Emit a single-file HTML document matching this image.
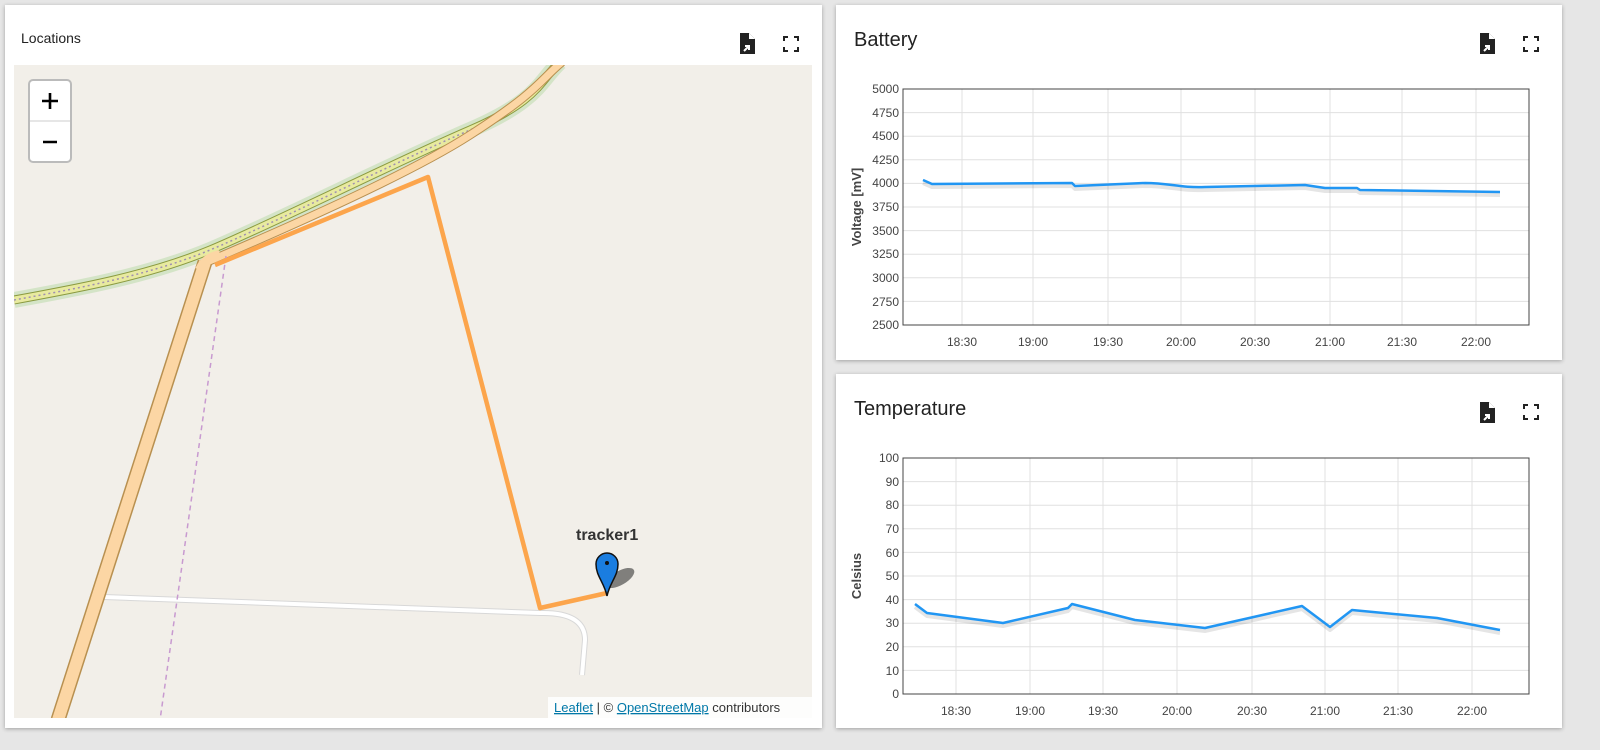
<!DOCTYPE html>
<html><head><meta charset="utf-8"><style>
body{margin:0;width:1600px;height:750px;background:#e6e6e6;font-family:"Liberation Sans",sans-serif;position:relative;overflow:hidden}
.card{position:absolute;background:#fff;box-shadow:0 1px 4px rgba(0,0,0,.3)}
.t{position:absolute;color:#222}
svg{position:absolute;left:0;top:0}
.ic{position:absolute}
</style></head><body>
<div class="card" style="left:5px;top:5px;width:817px;height:723px"></div>
<div class="card" style="left:836px;top:5px;width:726px;height:355px"></div>
<div class="card" style="left:836px;top:374px;width:726px;height:354px"></div>
<div class="t" style="left:21px;top:30px;font-size:14px">Locations</div>
<div class="t" style="left:854px;top:29px;font-size:20px">Battery</div>
<div class="t" style="left:854px;top:398px;font-size:20px">Temperature</div>
<svg width="1600" height="750" viewBox="0 0 1600 750">
<defs><clipPath id="m"><rect x="14" y="65" width="798" height="653"/></clipPath>
<g id="dl"><path d="M0 -9h9l6 6v15h-15z" fill="#222"/><path d="M9 -9v6h6" fill="#fff"/><path d="M4 9l5-5M5 4h4v4" stroke="#fff" stroke-width="2" fill="none"/></g>
<g id="fs" fill="none" stroke="#222" stroke-width="2"><path d="M0 4V0h4M10 0h4v4M14 10v4h-4M4 14H0v-4"/></g>
</defs>
<!-- icons -->
<use href="#dl" x="740" y="42"/><use href="#fs" x="784" y="37"/>
<use href="#dl" x="1480" y="42"/><use href="#fs" x="1524" y="37"/>
<use href="#dl" x="1480" y="411"/><use href="#fs" x="1524" y="405"/>
<!-- map -->
<g clip-path="url(#m)">
<rect x="14" y="65" width="798" height="653" fill="#f2efe9"/>
<path d="M14 300C80 288 150 275 210 250S400 160 470 130S540 80 560 62" stroke="#c8e0b8" stroke-width="16" fill="none" opacity=".7"/>
<path d="M14 300C80 288 150 275 210 250S400 160 470 130S540 80 560 62" stroke="#8a9a40" stroke-width="9" fill="none"/>
<path d="M14 300C80 288 150 275 210 250S400 160 470 130S540 80 560 62" stroke="#e8eaa0" stroke-width="7" fill="none"/>
<path d="M14 300C80 288 150 275 210 250S400 160 470 130S540 80 560 62" stroke="#a090b0" stroke-width="1.5" stroke-dasharray="2 3" fill="none"/>
<path d="M200 265C240 248 400 180 470 135S540 80 562 62" stroke="#b89050" stroke-width="9" fill="none"/>
<path d="M200 265C240 248 400 180 470 135S540 80 562 62" stroke="#fcd6a4" stroke-width="7" fill="none"/>
<path d="M104 597L540 613Q585 612 585 640L582 675" stroke="#d8d8d8" stroke-width="6" fill="none"/>
<path d="M104 597L540 613Q585 612 585 640L582 675" stroke="#fff" stroke-width="4" fill="none"/>
<path d="M205 262L58 720" stroke="#b89050" stroke-width="15" fill="none"/>
<path d="M205 262L58 720" stroke="#fcd6a4" stroke-width="12" fill="none"/>
<path d="M200 270Q205 258 220 255" stroke="#fcd6a4" stroke-width="10" fill="none"/>
<path d="M226 256L160 720" stroke="#c89ad0" stroke-width="1.5" stroke-dasharray="5 4" fill="none"/>
<path d="M215 265L428 177L540 608L607 593" stroke="#fca54c" stroke-width="4.5" fill="none" stroke-linejoin="round"/>
<ellipse cx="620" cy="578" rx="16" ry="7" fill="#333" opacity=".6" transform="rotate(-30 620 578)"/>
<path d="M607 596C604 582 596 576 596 564a11 11 0 0 1 22 0c0 12-8 18-11 32z" fill="#1a7de0" stroke="#111" stroke-width="1.5"/>
<circle cx="607" cy="563" r="2" fill="#111"/>
<rect x="548" y="697" width="264" height="21" fill="#fff" opacity=".85"/>
</g>
<text x="576" y="540" font-size="16" font-weight="bold" fill="#333">tracker1</text>
<text x="554" y="712" font-size="13" fill="#333"><tspan fill="#0078a8" text-decoration="underline">Leaflet</tspan> | © <tspan fill="#0078a8" text-decoration="underline">OpenStreetMap</tspan> contributors</text>
<!-- zoom control -->
<rect x="29" y="80" width="42" height="82" rx="4" fill="#fff" stroke="#bbb" stroke-width="2"/>
<line x1="30" y1="121" x2="70" y2="121" stroke="#ccc"/>
<path d="M42 101h16M50 93v16M43 142h14" stroke="#000" stroke-width="2.6"/>
<!-- battery chart -->
<g stroke="#e0e0e0" stroke-width="1">
<path d="M903 112.6h626M903 136.2h626M903 159.8h626M903 183.4h626M903 207h626M903 230.6h626M903 254.2h626M903 277.8h626M903 301.4h626"/>
<path d="M962 89v236M1033 89v236M1108 89v236M1181 89v236M1255 89v236M1330 89v236M1402 89v236M1476 89v236"/>
<path d="M903 481.6h626M903 505.2h626M903 528.8h626M903 552.4h626M903 576h626M903 599.6h626M903 623.2h626M903 646.8h626M903 670.4h626"/>
<path d="M956 458v236M1030 458v236M1103 458v236M1177 458v236M1252 458v236M1325 458v236M1398 458v236M1472 458v236"/>
</g>
<rect x="903" y="89" width="626" height="236" fill="none" stroke="#444"/>
<rect x="903" y="458" width="626" height="236" fill="none" stroke="#444"/>
<g font-size="12" fill="#444" text-anchor="end">
<text x="899" y="93">5000</text><text x="899" y="117">4750</text><text x="899" y="140">4500</text><text x="899" y="164">4250</text><text x="899" y="187">4000</text><text x="899" y="211">3750</text><text x="899" y="235">3500</text><text x="899" y="258">3250</text><text x="899" y="282">3000</text><text x="899" y="306">2750</text><text x="899" y="329">2500</text>
<text x="899" y="462">100</text><text x="899" y="486">90</text><text x="899" y="509">80</text><text x="899" y="533">70</text><text x="899" y="557">60</text><text x="899" y="580">50</text><text x="899" y="604">40</text><text x="899" y="627">30</text><text x="899" y="651">20</text><text x="899" y="675">10</text><text x="899" y="698">0</text>
</g>
<g font-size="12" fill="#444" text-anchor="middle">
<text x="962" y="346">18:30</text><text x="1033" y="346">19:00</text><text x="1108" y="346">19:30</text><text x="1181" y="346">20:00</text><text x="1255" y="346">20:30</text><text x="1330" y="346">21:00</text><text x="1402" y="346">21:30</text><text x="1476" y="346">22:00</text>
<text x="956" y="715">18:30</text><text x="1030" y="715">19:00</text><text x="1103" y="715">19:30</text><text x="1177" y="715">20:00</text><text x="1252" y="715">20:30</text><text x="1325" y="715">21:00</text><text x="1398" y="715">21:30</text><text x="1472" y="715">22:00</text>
</g>
<text transform="translate(861 207) rotate(-90)" font-size="13" font-weight="bold" fill="#444" text-anchor="middle">Voltage [mV]</text>
<text transform="translate(861 576) rotate(-90)" font-size="13" font-weight="bold" fill="#444" text-anchor="middle">Celsius</text>
<g fill="none" stroke-linejoin="round">
<path d="M923 183L932 187L1072 186L1075 189L1145 186C1170 186 1180 191 1205 190L1305 188L1325 191L1357 191L1360 193L1500 195" stroke="#000" stroke-opacity=".1" stroke-width="4"/>
<path d="M923 180L932 184L1072 183L1075 186L1145 183C1170 183 1180 188 1205 187L1305 185L1325 188L1357 188L1360 190L1500 192" stroke="#2196f3" stroke-width="2.5"/>
<path d="M915 607L927 616L1003 626L1068 611L1072 607L1135 623L1205 631L1302 609L1330 630L1352 613L1437 621L1500 633" stroke="#000" stroke-opacity=".1" stroke-width="4"/>
<path d="M915 604L927 613L1003 623L1068 608L1072 604L1135 620L1205 628L1302 606L1330 627L1352 610L1437 618L1500 630" stroke="#2196f3" stroke-width="2.5"/>
</g>
</svg>
</body></html>
